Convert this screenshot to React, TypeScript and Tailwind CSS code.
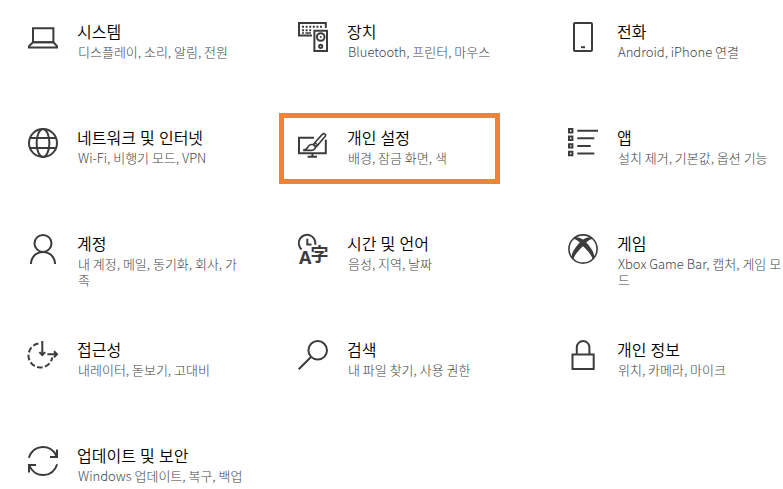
import type { ReactNode } from "react";

interface Category {
  id: string;
  title: string;
  description: string;
  icon: ReactNode;
  highlighted?: boolean;
}

const categories: Category[] = [
  {
    id: "system",
    title: "시스템",
    description: "디스플레이, 소리, 알림, 전원",
    icon: (
      <>
        <path d="M5 6.3h20.4v14H5z" />
        <path d="M5 20.3h20.4l3.6 3.8v1.4H1v-1.4z" />
      </>
    ),
  },
  {
    id: "devices",
    title: "장치",
    description: "Bluetooth, 프린터, 마우스",
    icon: (
      <>
        <path d="M14 13.6H1V1h26.8v5" />
        <path d="M4 4.8h21.5" strokeDasharray="2 1.6" />
        <path d="M4 8.2h10" strokeDasharray="2 1.6" />
        <path d="M4 11h2M7.4 11H13" strokeWidth="1.5" />
        <path d="M16.4 8.7H29v20.2H16.4z" />
        <circle cx="22.7" cy="15" r="3.8" />
        <circle cx="22.7" cy="15" r="1" fill="currentColor" stroke="none" />
        <circle cx="22.7" cy="24.3" r="1.6" />
      </>
    ),
  },
  {
    id: "phone",
    title: "전화",
    description: "Android, iPhone 연결",
    icon: (
      <>
        <rect x="6" y="1" width="18" height="28" rx="1" />
        <path d="M13 25.2h4" />
      </>
    ),
  },
  {
    id: "network",
    title: "네트워크 및 인터넷",
    description: "Wi-Fi, 비행기 모드, VPN",
    icon: (
      <>
        <circle cx="15" cy="15" r="14" />
        <ellipse cx="15" cy="15" rx="6.4" ry="14" />
        <path d="M2 10h26M2 20h26" />
      </>
    ),
  },
  {
    id: "personalization",
    title: "개인 설정",
    description: "배경, 잠금 화면, 색",
    highlighted: true,
    icon: (
      <>
        <path d="M16 9.8H1v15.4h26.8V11.8" />
        <path d="M14.4 25.2v3.6M9.6 28.8h9.4" />
        <path d="M15.4 16.2l8.9-9.8c1.9-2 4.3.2 2.7 2.2l-8.5 10z" strokeWidth="1.6" />
        <path d="M5.2 21.9c3.4.2 4-1.2 4.8-3 1.6-3 5.2-3.2 7-.9 1 2.4-.6 4.4-3.6 4.4H5.2" strokeWidth="1.6" />
        <path d="M17 14.5l3.2 2.9" strokeWidth="1.4" />
      </>
    ),
  },
  {
    id: "apps",
    title: "앱",
    description: "설치 제거, 기본값, 옵션 기능",
    icon: (
      <>
        <path d="M1 1h3.4v3.4H1zM1 8.6h3.4V12H1zM1 16.2h3.4v3.4H1zM1 23.8h3.4v3.4H1z" />
        <path d="M9.3 2.7H30M9.3 10.3h17M9.3 17.9h13.4M9.3 25.5h17" />
      </>
    ),
  },
  {
    id: "accounts",
    title: "계정",
    description: "내 계정, 메일, 동기화, 회사, 가족",
    icon: (
      <>
        <circle cx="15" cy="9.4" r="8.5" />
        <path d="M2.9 30C3.3 22.6 8.3 17.9 15 17.9S26.7 22.6 27.1 30" />
      </>
    ),
  },
  {
    id: "time-language",
    title: "시간 및 언어",
    description: "음성, 지역, 날짜",
    icon: (
      <>
        <path d="M3.6 15.4A8.3 8.3 0 1 1 17.2 10.8" />
        <path d="M9.3 4.8v5.6h4.2" />
        <text
          x="1"
          y="30"
          className="font-['Open_Sans',sans-serif] text-[18px] font-bold"
          fill="currentColor"
          stroke="none"
        >
          A
        </text>
        <text
          x="12.4"
          y="27"
          className="font-['Noto_Sans_CJK_KR',sans-serif] text-[18px] font-bold"
          fill="currentColor"
          stroke="none"
        >
          字
        </text>
      </>
    ),
  },
  {
    id: "gaming",
    title: "게임",
    description: "Xbox Game Bar, 캡처, 게임 모드",
    icon: (
      <>
        <circle cx="15" cy="15" r="14.1" strokeWidth="1.6" />
        <path
          d="M6.2 3.6C9.4 2.6 12.4 4 15 5.6c2.6-1.6 5.6-3 8.8-2l1.4 1.5c-2.3-.3-4.8 1.3-7 3.5 4.6 4.9 8.7 10.6 8 15.4l-1.5 1.7C23.7 20.9 19.3 16 15 12.2 10.7 16 6.3 20.9 5.3 25.7L3.8 24c-.7-4.8 3.4-10.5 8-15.4-2.2-2.2-4.7-3.8-7-3.5z"
          fill="currentColor"
          stroke="none"
        />
      </>
    ),
  },
  {
    id: "ease-of-access",
    title: "접근성",
    description: "내레이터, 돋보기, 고대비",
    icon: (
      <>
        <path d="M10.4 3.6A12 12 0 1 0 24.3 17.4" strokeDasharray="5.6 2.4" />
        <path d="M14.3 1v14M11.4 12.1l2.9 3 2.9-3" />
        <path d="M19.4 14.2H29M26 11.2l3 3-3 3" />
      </>
    ),
  },
  {
    id: "search",
    title: "검색",
    description: "내 파일 찾기, 사용 권한",
    icon: (
      <>
        <circle cx="19.7" cy="10.3" r="9.3" />
        <path d="M13 17L.7 29.3" />
      </>
    ),
  },
  {
    id: "privacy",
    title: "개인 정보",
    description: "위치, 카메라, 마이크",
    icon: (
      <>
        <path d="M4.5 14.5h21.2V29H4.5z" />
        <path d="M8.8 14.5V7.3a6.3 6.3 0 0 1 12.6 0v7.2" />
      </>
    ),
  },
  {
    id: "update",
    title: "업데이트 및 보안",
    description: "Windows 업데이트, 복구, 백업",
    icon: (
      <>
        <path d="M.8 11.8C5.5-2.2 23-2.8 28.8 10.6" />
        <path d="M29 3.4V11h-7" />
        <path d="M29.2 18.2C24.5 32.2 7 32.8 1.2 19.4" />
        <path d="M1 26.6V19h7" />
      </>
    ),
  },
];

function CategoryTile({ title, description, icon, highlighted, id }: Category) {
  return (
    <a href={`#${id}`} className="relative flex min-h-16 items-start gap-[19px]">
      <svg
        viewBox="0 0 30 30"
        className="mt-0.5 size-[30px] shrink-0 overflow-visible text-[#3c3c3c]"
        fill="none"
        stroke="currentColor"
        strokeWidth="2"
        aria-hidden="true"
      >
        {icon}
      </svg>
      <span className="min-w-0 flex-1 break-all">
        <span className="block font-['Open_Sans','Noto_Sans_CJK_KR',sans-serif] text-[16px] leading-6 font-[350] text-black">
          {title}
        </span>
        <span className="block pl-px text-[13px] leading-4 font-light text-[#444444]">{description}</span>
      </span>
      {/* Callout frame drawn over the tile */}
      {highlighted && (
        <span className="pointer-events-none absolute -top-[13px] right-[13px] bottom-[6px] -left-[19px] border-[5px] border-[#f58232]" />
      )}
    </a>
  );
}

export default function App() {
  return (
    <main className="min-h-screen bg-white pt-5 pl-7 font-['Noto_Sans_CJK_KR',sans-serif]">
      <nav aria-label="설정" className="grid grid-cols-3 gap-x-[55px] gap-y-[42px]">
        {categories.map((category) => (
          <CategoryTile key={category.id} {...category} />
        ))}
      </nav>
    </main>
  );
}
